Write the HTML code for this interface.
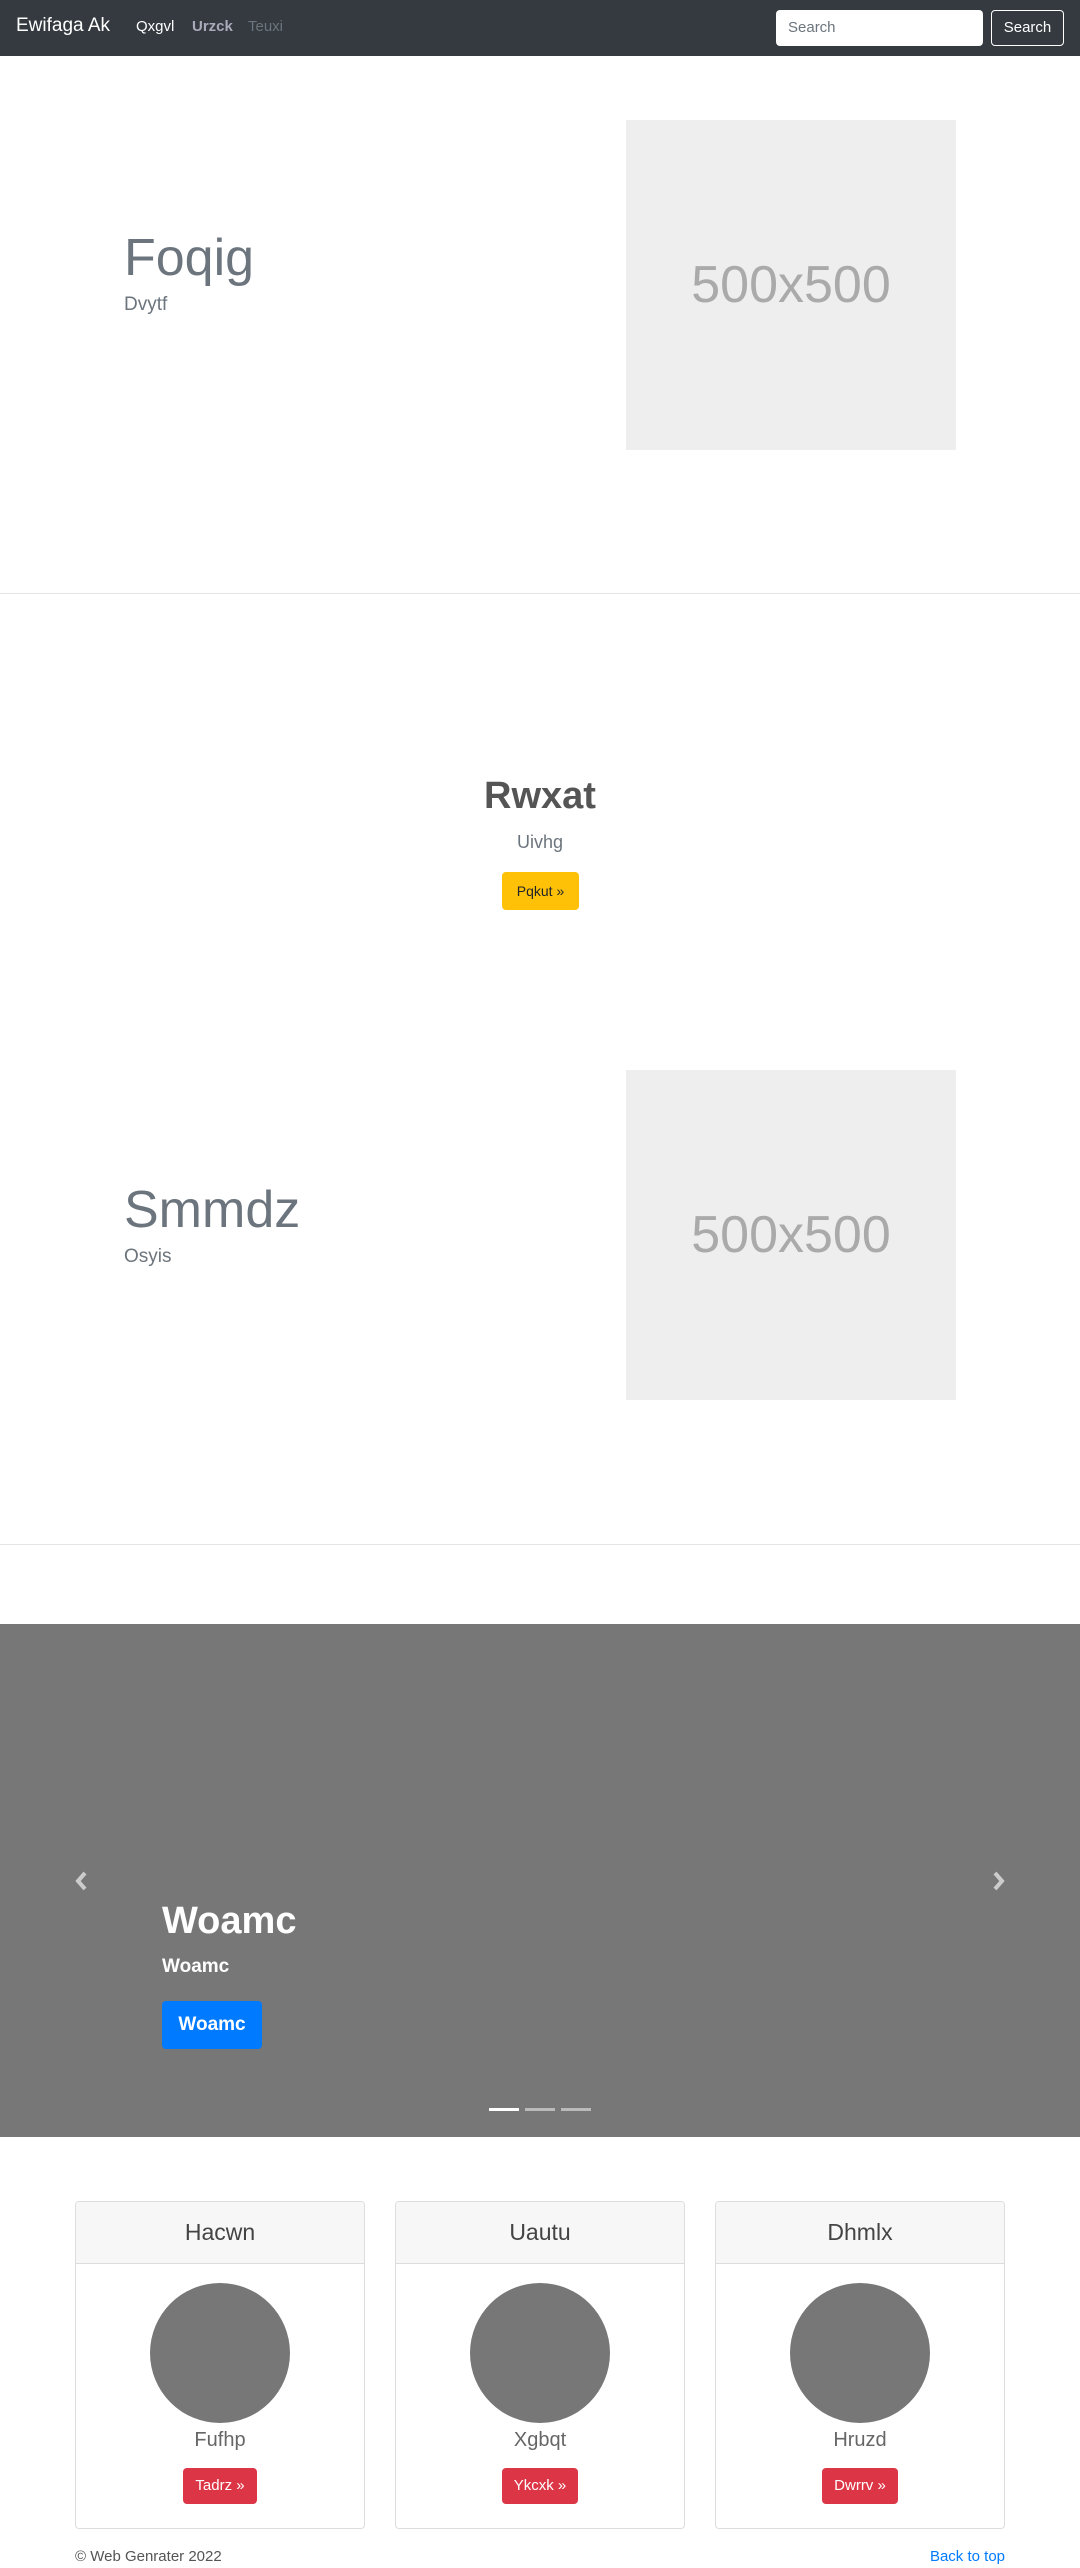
<!DOCTYPE html>
<html><head><meta charset="utf-8"><style>
*{box-sizing:border-box;margin:0;padding:0}
body{width:1080px;height:2568px;font-family:"Liberation Sans",sans-serif;color:#212529;background:#fff;position:relative;overflow:hidden}
.a{position:absolute}
.nav{left:0;top:0;width:1080px;height:56px;background:#343a40}
.ph{background:#eee;color:#aaa;font-size:52px;display:flex;align-items:center;justify-content:center;width:330px;height:330px;left:626px}
.hr{left:0;width:1080px;height:1px;background:#e5e5e5}
.card{top:2201px;width:290px;height:328px;border:1px solid #ddd;border-radius:4px;background:#fff;overflow:hidden}
.ch{height:62px;background:#f7f7f7;border-bottom:1px solid #ddd;text-align:center;font-size:23px;line-height:60px;color:#444}
.circ{width:140px;height:140px;border-radius:50%;background:#777;margin:19px auto 0}
.ct{text-align:center;color:#666;font-size:20px;margin-top:6px;font-weight:300}
.btn{display:block;margin:16px auto 0;background:#dc3545;color:#fff;border-radius:4px;font-size:15px;height:36px;line-height:36px;padding:0 12px;width:max-content}
.ind{top:2108px;width:30px;height:3px;background:rgba(255,255,255,.5)}
</style></head><body>
<div class="a nav"></div>
<div class="a" style="left:16px;top:15px;color:#fff;font-size:19px">Ewifaga Ak</div>
<div class="a" style="left:136px;top:18px;color:#fff;font-size:15px">Qxgvl</div>
<div class="a" style="left:192px;top:18px;color:#aab;font-size:15px;font-weight:bold">Urzck</div>
<div class="a" style="left:248px;top:18px;color:#6c757d;font-size:15px">Teuxi</div>
<div class="a" style="left:776px;top:10px;width:207px;height:36px;background:#fff;border-radius:4px;color:#6c757d;font-size:15px;line-height:36px;padding-left:12px">Search</div>
<div class="a" style="left:991px;top:10px;width:73px;height:36px;border:1px solid #fff;border-radius:4px;color:#fff;font-size:15px;line-height:34px;text-align:center">Search</div>

<div class="a" style="left:124px;top:228px;font-size:52px;font-weight:300;color:#6c757d">Foqig</div>
<div class="a" style="left:124px;top:294px;font-size:19px;font-weight:300;color:#6c757d">Dvytf</div>
<div class="a ph" style="top:120px">500x500</div>
<div class="a hr" style="top:593px"></div>

<div class="a" style="left:0;width:1080px;top:775px;text-align:center;font-size:38px;font-weight:bold;color:#555">Rwxat</div>
<div class="a" style="left:0;width:1080px;top:832px;text-align:center;font-size:18px;color:#6c757d">Uivhg</div>
<div class="a" style="left:502px;top:872px;width:77px;height:38px;background:#ffc107;border-radius:4px;font-size:14px;line-height:38px;text-align:center;color:#212529">Pqkut »</div>

<div class="a" style="left:124px;top:1180px;font-size:52px;font-weight:300;color:#6c757d">Smmdz</div>
<div class="a" style="left:124px;top:1246px;font-size:19px;font-weight:300;color:#6c757d">Osyis</div>
<div class="a ph" style="top:1070px">500x500</div>
<div class="a hr" style="top:1544px"></div>

<div class="a" style="left:0;top:1624px;width:1080px;height:513px;background:#777"></div>
<svg class="a" style="left:72px;top:1870px" width="20" height="22" viewBox="0 0 20 22"><path d="M13 3 L6 11 L13 19" stroke="#ccc" stroke-width="4" fill="none"/></svg>
<svg class="a" style="left:988px;top:1870px" width="20" height="22" viewBox="0 0 20 22"><path d="M7 3 L14 11 L7 19" stroke="#ccc" stroke-width="4" fill="none"/></svg>
<div class="a" style="left:162px;top:1900px;font-size:38px;font-weight:bold;color:#fff">Woamc</div>
<div class="a" style="left:162px;top:1956px;font-size:19px;font-weight:bold;color:#fff">Woamc</div>
<div class="a" style="left:162px;top:2001px;width:100px;height:48px;background:#007bff;border-radius:4px;color:#fff;font-size:19px;font-weight:bold;line-height:48px;text-align:center">Woamc</div>
<div class="a ind" style="left:489px;background:#fff"></div>
<div class="a ind" style="left:525px"></div>
<div class="a ind" style="left:561px"></div>

<div class="a card" style="left:75px"><div class="ch">Hacwn</div><div class="circ"></div><div class="ct">Fufhp</div><div class="btn">Tadrz »</div></div>
<div class="a card" style="left:395px"><div class="ch">Uautu</div><div class="circ"></div><div class="ct">Xgbqt</div><div class="btn">Ykcxk »</div></div>
<div class="a card" style="left:715px"><div class="ch">Dhmlx</div><div class="circ"></div><div class="ct">Hruzd</div><div class="btn">Dwrrv »</div></div>

<div class="a" style="left:75px;top:2548px;font-size:15px;color:#555">© Web Genrater 2022</div>
<div class="a" style="right:75px;top:2548px;font-size:15px;color:#007bff">Back to top</div>
</body></html>
